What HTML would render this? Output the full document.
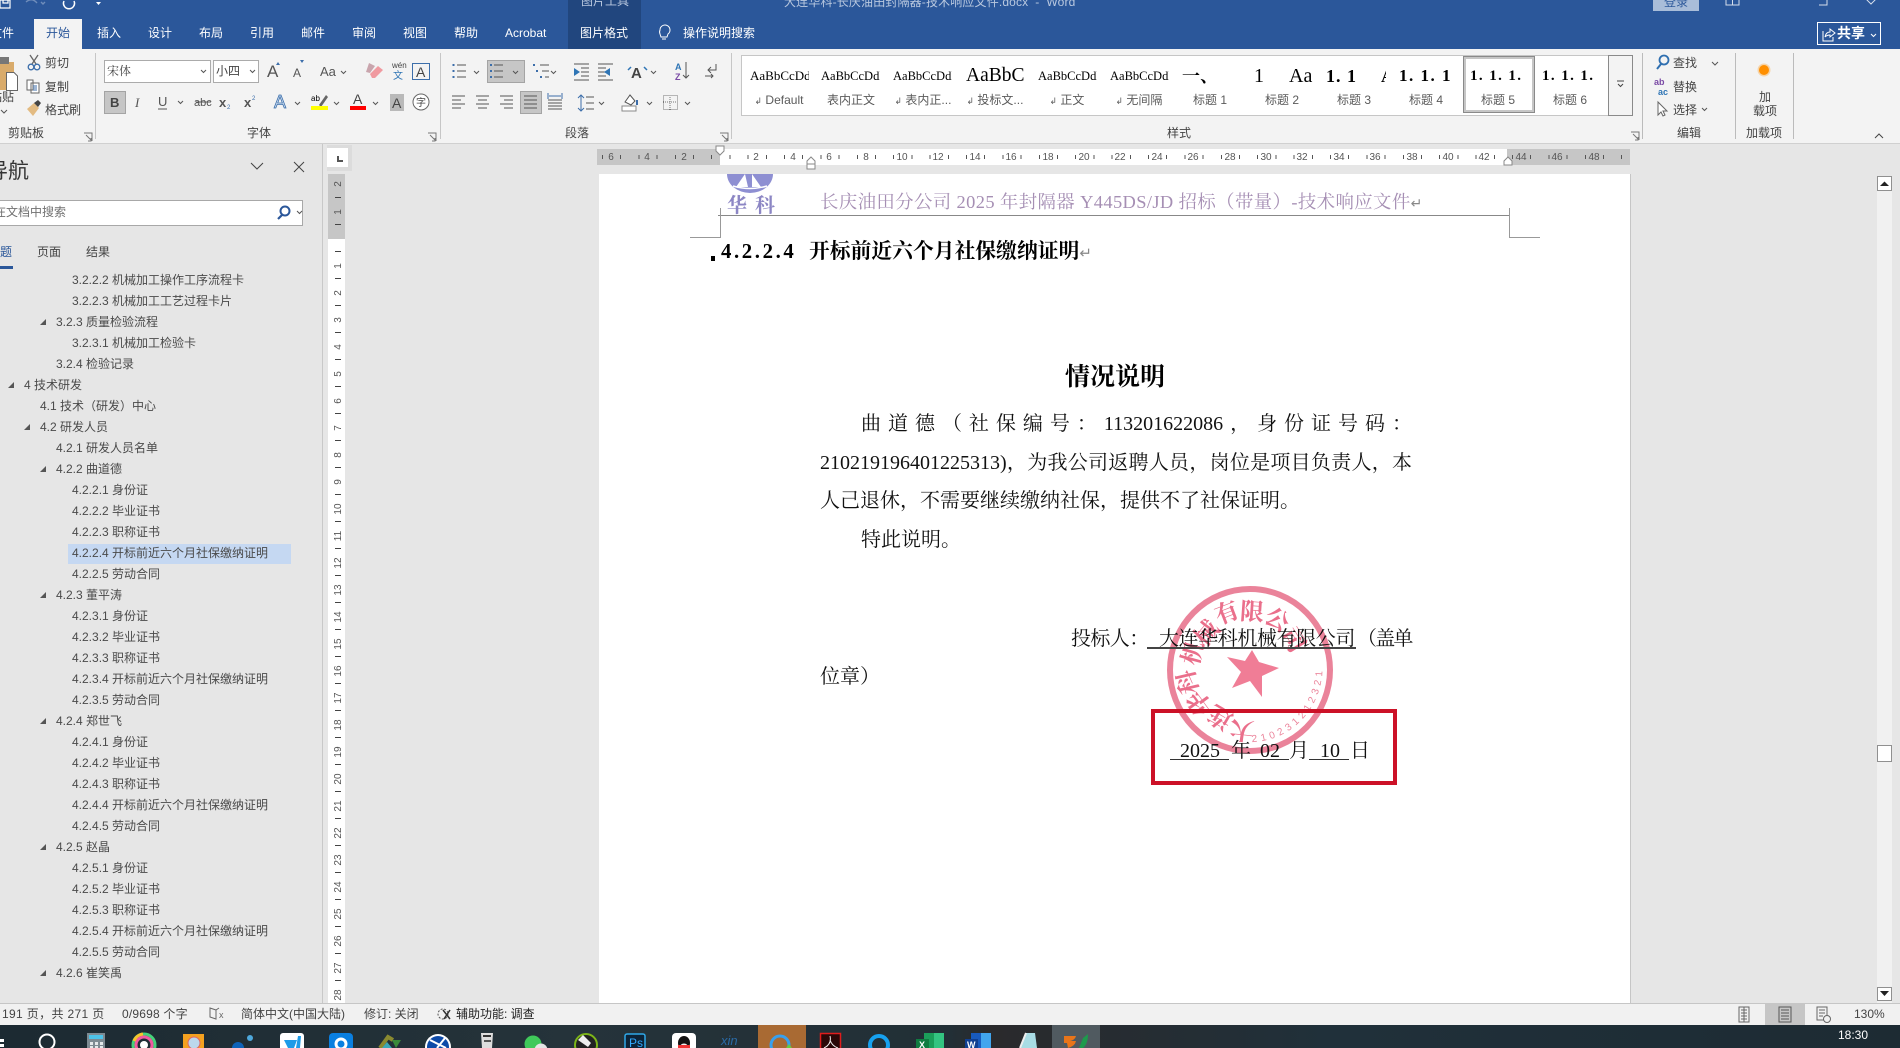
<!DOCTYPE html>
<html lang="zh-CN"><head><meta charset="utf-8"><title>Word</title>
<style>
html,body{margin:0;padding:0;width:1900px;height:1048px;overflow:hidden;background:#e6e6e6}
body{position:relative;font-family:"Liberation Sans","Noto Sans CJK SC",sans-serif;font-size:12px;color:#444}
div,span.a{position:absolute}
.t{position:absolute;line-height:16px;white-space:nowrap}
.c{transform:translateX(-50%)}
.w{color:#fff}
.n{position:absolute;line-height:16px;white-space:nowrap;color:#4a4a4a;font-size:12px;transform:translateY(1px)}
.tri{position:absolute;width:0;height:0;border-left:6px solid transparent;border-bottom:6px solid #555}
.p{position:absolute;overflow:hidden;white-space:nowrap;font-family:"Liberation Serif","Noto Serif CJK SC",serif;color:#000;height:24px;line-height:24px;width:59px;font-size:12.5px}
.l{position:absolute;top:92px;line-height:16px;color:#5a5a5a;white-space:nowrap;transform:translateX(-50%)}
.sep{position:absolute;width:1px;background:#c6c6c6}
.d{position:absolute;font-family:"Liberation Serif","Noto Serif CJK SC",serif;font-size:20px;color:#111;line-height:28px;white-space:nowrap}
.j{text-align:justify;text-align-last:justify;white-space:normal}
svg{position:absolute;left:0;top:0}
</style></head><body>

<!-- title bar -->
<div style="left:0;top:0;width:1900px;height:49px;background:#2b579a"></div>
<div style="left:568px;top:0;width:73px;height:49px;background:#21467e"></div>
<div class="t" style="left:581px;top:-7px;color:#b9c8df">图片工具</div>
<div class="t" style="left:784px;top:-6px;color:#b9c8df;letter-spacing:.15px">大连华科-长庆油田封隔器-技术响应文件.docx&nbsp; - &nbsp;Word</div>
<div style="left:1653px;top:0;width:46px;height:11px;background:#a9bdd9"></div>
<div class="t" style="left:1664px;top:-6px;color:#2b579a">登录</div>
<div style="left:34px;top:19px;width:48px;height:30px;background:#f3f3f3"></div>
<div class="t w" style="left:-10px;top:25px">文件</div>
<div class="t" style="left:46px;top:25px;color:#2b579a">开始</div>
<div class="t w" style="left:97px;top:25px">插入</div>
<div class="t w" style="left:148px;top:25px">设计</div>
<div class="t w" style="left:199px;top:25px">布局</div>
<div class="t w" style="left:250px;top:25px">引用</div>
<div class="t w" style="left:301px;top:25px">邮件</div>
<div class="t w" style="left:352px;top:25px">审阅</div>
<div class="t w" style="left:403px;top:25px">视图</div>
<div class="t w" style="left:454px;top:25px">帮助</div>
<div class="t w" style="left:505px;top:25px">Acrobat</div>
<div class="t w" style="left:580px;top:25px">图片格式</div>
<div class="t w" style="left:683px;top:25px">操作说明搜索</div>
<div style="left:1817px;top:22px;width:62px;height:21px;border:1px solid #fff"></div>
<div class="t w" style="left:1837px;top:25px;font-size:14px;font-weight:bold">共享</div>

<!-- ribbon -->
<div style="left:0;top:49px;width:1900px;height:94px;background:#f3f3f3;border-bottom:1px solid #d0d0d0"></div>
<div class="sep" style="left:95px;top:53px;height:86px"></div>
<div class="sep" style="left:440px;top:53px;height:86px"></div>
<div class="sep" style="left:731px;top:53px;height:86px"></div>
<div class="sep" style="left:1642px;top:53px;height:86px;background:#bbb"></div>
<div class="sep" style="left:1735px;top:53px;height:86px;background:#bbb"></div>
<div class="sep" style="left:1793px;top:53px;height:86px;background:#bbb"></div>

<div class="t" style="left:-10px;top:89px">粘贴</div>
<div class="t" style="left:45px;top:55px">剪切</div>
<div class="t" style="left:45px;top:79px">复制</div>
<div class="t" style="left:45px;top:102px">格式刷</div>
<div class="t c" style="left:26px;top:125px">剪贴板</div>
<div class="t c" style="left:259px;top:125px">字体</div>
<div class="t c" style="left:577px;top:125px">段落</div>
<div class="t c" style="left:1179px;top:125px">样式</div>
<div class="t c" style="left:1689px;top:125px">编辑</div>
<div class="t c" style="left:1764px;top:125px">加载项</div>

<div style="left:104px;top:60px;width:105px;height:21px;border:1px solid #ababab;background:#fff"></div>
<div class="t" style="left:107px;top:63px;font-family:'Noto Serif CJK SC',serif">宋体</div>
<div style="left:213px;top:60px;width:44px;height:21px;border:1px solid #ababab;background:#fff"></div>
<div class="t" style="left:216px;top:63px">小四</div>

<div style="left:104px;top:91px;width:20px;height:21px;background:#c6c6c6;border:1px solid #a4a4a4"></div>
<div style="left:487px;top:60px;width:36px;height:21px;background:#c6c6c6;border:1px solid #a4a4a4"></div>
<div style="left:520px;top:91px;width:20px;height:21px;background:#c6c6c6;border:1px solid #a4a4a4"></div>

<!-- style gallery -->
<div style="left:741px;top:55px;width:890px;height:59px;background:#fff;border:1px solid #c6c6c6"></div>
<div style="left:1463px;top:56px;width:66px;height:51px;border:3px solid #c6c6c6;outline:1px solid #8a8a8a;outline-offset:-1px;background:#fff"></div>
<div style="left:1608px;top:55px;width:23px;height:59px;background:#f3f3f3;border:1px solid #8a8a8a"></div>
<div class="p" style="left:750px;top:64px;font-size:13px">AaBbCcDdEe</div>
<div class="p" style="left:821px;top:64px;font-size:12.5px">AaBbCcDdEe</div>
<div class="p" style="left:893px;top:64px;font-size:12.5px">AaBbCcDdEe</div>
<div class="p" style="left:966px;top:64px;font-size:19.5px">AaBbC</div>
<div class="p" style="left:1038px;top:64px;font-size:12.5px">AaBbCcDdEe</div>
<div class="p" style="left:1110px;top:64px;font-size:12.5px">AaBbCcDdEe</div>
<div class="p" style="left:1182px;top:62px;font-size:18px;width:38px;height:28px;line-height:28px;font-weight:bold">一、</div>
<div class="p" style="left:1254px;top:64px;font-size:20px;width:20px">1</div>
<div class="p" style="left:1289px;top:64px;font-size:20px;width:30px">Aa</div>
<div class="p" style="left:1326px;top:64px;font-size:18px;width:34px;font-weight:bold;letter-spacing:1px">1. 1</div>
<div class="p" style="left:1381px;top:64px;font-size:18px;width:5px;font-weight:bold">A</div>
<div class="p" style="left:1399px;top:64px;font-size:17px;width:56px;font-weight:bold;letter-spacing:1.5px">1. 1. 1</div>
<div class="p" style="left:1470px;top:64px;font-size:15px;width:58px;font-weight:bold;letter-spacing:1.4px">1. 1. 1. 1</div>
<div class="p" style="left:1542px;top:64px;font-size:15px;width:58px;font-weight:bold;letter-spacing:1.4px">1. 1. 1. 1</div>
<div class="l" style="left:779px"><span style="font-size:9px">↲</span> Default</div>
<div class="l" style="left:851px">表内正文</div>
<div class="l" style="left:923px"><span style="font-size:9px">↲</span> 表内正...</div>
<div class="l" style="left:995px"><span style="font-size:9px">↲</span> 投标文...</div>
<div class="l" style="left:1067px"><span style="font-size:9px">↲</span> 正文</div>
<div class="l" style="left:1139px"><span style="font-size:9px">↲</span> 无间隔</div>
<div class="l" style="left:1210px">标题 1</div>
<div class="l" style="left:1282px">标题 2</div>
<div class="l" style="left:1354px">标题 3</div>
<div class="l" style="left:1426px">标题 4</div>
<div class="l" style="left:1498px">标题 5</div>
<div class="l" style="left:1570px">标题 6</div>

<div class="t" style="left:1673px;top:55px">查找</div>
<div class="t" style="left:1673px;top:79px">替换</div>
<div class="t" style="left:1673px;top:102px">选择</div>
<div class="t c" style="left:1765px;top:89px">加</div>
<div class="t c" style="left:1765px;top:103px">载项</div>

<!-- nav panel -->
<div style="left:322px;top:144px;width:1px;height:859px;background:#c8c8c8"></div>
<div class="t" style="left:-13px;top:158px;font-size:21px;line-height:28px;color:#333">导航</div>
<div style="left:-2px;top:200px;width:303px;height:24px;background:#fff;border:1px solid #a8a8a8"></div>
<div class="t" style="left:-6px;top:204px;color:#707070">在文档中搜索</div>
<div class="t" style="left:-12px;top:244px;color:#2b579a">标题</div>
<div style="left:0;top:266px;width:13px;height:3px;background:#2b579a"></div>
<div class="t" style="left:37px;top:244px">页面</div>
<div class="t" style="left:86px;top:244px">结果</div>
<div style="left:68px;top:544px;width:223px;height:20px;background:#c5d8f2"></div>

<div class="n" style="left:72px;top:271px">3.2.2.2 机械加工操作工序流程卡</div>
<div class="n" style="left:72px;top:292px">3.2.2.3 机械加工工艺过程卡片</div>
<div class="tri" style="left:40px;top:319px"></div><div class="n" style="left:56px;top:313px">3.2.3 质量检验流程</div>
<div class="n" style="left:72px;top:334px">3.2.3.1 机械加工检验卡</div>
<div class="n" style="left:56px;top:355px">3.2.4 检验记录</div>
<div class="tri" style="left:8px;top:382px"></div><div class="n" style="left:24px;top:376px">4 技术研发</div>
<div class="n" style="left:40px;top:397px">4.1 技术（研发）中心</div>
<div class="tri" style="left:24px;top:424px"></div><div class="n" style="left:40px;top:418px">4.2 研发人员</div>
<div class="n" style="left:56px;top:439px">4.2.1 研发人员名单</div>
<div class="tri" style="left:40px;top:466px"></div><div class="n" style="left:56px;top:460px">4.2.2 曲道德</div>
<div class="n" style="left:72px;top:481px">4.2.2.1 身份证</div>
<div class="n" style="left:72px;top:502px">4.2.2.2 毕业证书</div>
<div class="n" style="left:72px;top:523px">4.2.2.3 职称证书</div>
<div class="n" style="left:72px;top:544px">4.2.2.4 开标前近六个月社保缴纳证明</div>
<div class="n" style="left:72px;top:565px">4.2.2.5 劳动合同</div>
<div class="tri" style="left:40px;top:592px"></div><div class="n" style="left:56px;top:586px">4.2.3 董平涛</div>
<div class="n" style="left:72px;top:607px">4.2.3.1 身份证</div>
<div class="n" style="left:72px;top:628px">4.2.3.2 毕业证书</div>
<div class="n" style="left:72px;top:649px">4.2.3.3 职称证书</div>
<div class="n" style="left:72px;top:670px">4.2.3.4 开标前近六个月社保缴纳证明</div>
<div class="n" style="left:72px;top:691px">4.2.3.5 劳动合同</div>
<div class="tri" style="left:40px;top:718px"></div><div class="n" style="left:56px;top:712px">4.2.4 郑世飞</div>
<div class="n" style="left:72px;top:733px">4.2.4.1 身份证</div>
<div class="n" style="left:72px;top:754px">4.2.4.2 毕业证书</div>
<div class="n" style="left:72px;top:775px">4.2.4.3 职称证书</div>
<div class="n" style="left:72px;top:796px">4.2.4.4 开标前近六个月社保缴纳证明</div>
<div class="n" style="left:72px;top:817px">4.2.4.5 劳动合同</div>
<div class="tri" style="left:40px;top:844px"></div><div class="n" style="left:56px;top:838px">4.2.5 赵晶</div>
<div class="n" style="left:72px;top:859px">4.2.5.1 身份证</div>
<div class="n" style="left:72px;top:880px">4.2.5.2 毕业证书</div>
<div class="n" style="left:72px;top:901px">4.2.5.3 职称证书</div>
<div class="n" style="left:72px;top:922px">4.2.5.4 开标前近六个月社保缴纳证明</div>
<div class="n" style="left:72px;top:943px">4.2.5.5 劳动合同</div>
<div class="tri" style="left:40px;top:970px"></div><div class="n" style="left:56px;top:964px">4.2.6 崔笑禹</div>

<!-- rulers -->
<div style="left:597px;top:149px;width:1033px;height:16px;background:#c6c6c6"></div>
<div style="left:720px;top:149px;width:787px;height:16px;background:#fff"></div>
<div style="left:601.7px;top:155px;width:1028px;height:4px;background:repeating-linear-gradient(90deg,#555 0,#555 1px,transparent 1px,transparent 18.2px)"></div>
<div style="left:327px;top:145px;width:25px;height:26px;background:#dcdcdc"></div>
<div style="left:327px;top:148px;width:21px;height:19px;background:#fff"></div>
<div style="left:337px;top:156px;width:2px;height:6px;background:#555"></div>
<div style="left:337px;top:160px;width:6px;height:2px;background:#555"></div>
<div style="left:328px;top:174px;width:17px;height:65px;background:#c6c6c6"></div>
<div style="left:328px;top:239px;width:17px;height:764px;background:#fff"></div>
<div style="left:335px;top:197px;width:6px;height:806px;background:repeating-linear-gradient(180deg,#444 0,#444 1px,transparent 1px,transparent 27px)"></div>

<!-- page -->
<div style="left:599px;top:174px;width:1031px;height:829px;background:#fff;border-right:1px solid #c6c6c6"></div>

<!-- logo + stamp -->
<svg width="1900" height="1048" viewBox="0 0 1900 1048">
<path d="M727 174A23 19 0 0 0 773 174Z" fill="#8e8fd2"/>
<path d="M745 174l-9 13h12zM752 174v13h9z" fill="#fff"/>
<path d="M733 186q17 5 34 0" stroke="#fff" stroke-width="1.500" fill="none"/>
<g opacity=".88">
<defs><path id="s2" d="M1252 742A72 74 0 0 0 1322 660"/></defs>
<ellipse cx="1250" cy="670" rx="80" ry="81" fill="none" stroke="#e8738d" stroke-width="6"/>
<polygon points="1252,650 1259,662 1279,668 1262,676 1262,697 1250,681 1232,688 1241,672 1227,657 1245,661" fill="#ee6c88"/>
<g font-family="Noto Serif CJK SC,serif" font-size="24" fill="#e85c7c" font-weight="bold" text-anchor="middle">
<text transform="translate(1242 730) rotate(186) translate(0 8)">大</text>
<text transform="translate(1220 717) rotate(210) translate(0 8)">连</text>
<text transform="translate(1200 703) rotate(234) translate(0 8)">华</text>
<text transform="translate(1188 682) rotate(257) translate(0 8)">科</text>
<text transform="translate(1193 653) rotate(285) translate(0 8)">机</text>
<text transform="translate(1207 633) rotate(310) translate(0 8)">械</text>
<text transform="translate(1227 613) rotate(339) translate(0 8)">有</text>
<text transform="translate(1252 612) rotate(4) translate(0 8)">限</text>
<text transform="translate(1277 620) rotate(31) translate(0 8)">公</text>
<text transform="translate(1293 640) rotate(58) translate(0 8)">司</text>
</g>
<text font-family="Liberation Sans,sans-serif" font-size="10" fill="#e8738d"><textPath href="#s2" letter-spacing="3.900">210231212321</textPath></text>
</g>
</svg>

<!-- header -->
<div class="t" style="left:727px;top:192px;color:#8c86c4;font-size:20px;line-height:24px;letter-spacing:8px;font-weight:bold;font-family:'Noto Serif CJK SC',serif">华科</div>
<div class="t" style="left:820px;top:190px;color:#a68fb4;font-size:18.4px;line-height:24px;letter-spacing:.4px;font-family:'Liberation Serif','Noto Serif CJK SC',serif">长庆油田分公司 2025 年封隔器 Y445DS/JD 招标（带量）-技术响应文件<span style="color:#888;font-size:14px">↵</span></div>
<div style="left:718px;top:215px;width:792px;height:1px;background:#888"></div>
<div style="left:720px;top:208px;width:1px;height:29px;background:#999"></div>
<div style="left:690px;top:237px;width:31px;height:1px;background:#999"></div>
<div style="left:1509px;top:208px;width:1px;height:29px;background:#999"></div>
<div style="left:1509px;top:237px;width:31px;height:1px;background:#999"></div>

<!-- body -->
<div style="left:711px;top:256px;width:4px;height:5px;background:#000"></div>
<div class="d" style="left:721px;top:238px;font-weight:bold;font-size:20.8px;color:#000;letter-spacing:2.600px">4.2.2.4</div>
<div class="d" style="left:809px;top:238px;font-weight:bold;font-size:20.8px;color:#000">开标前近六个月社保缴纳证明<span style="color:#888;font-weight:normal;font-size:15px">↵</span></div>
<div class="d" style="left:1065px;top:360px;font-weight:bold;font-size:25px;line-height:36px;color:#000">情况说明</div>
<div class="d j" style="left:861px;top:410px;width:551px;height:28px">曲道德（社保编号：113201622086，身份证号码：</div>
<div class="d j" style="left:820px;top:449px;width:592px;height:28px">210219196401225313)，为我公司返聘人员，岗位是项目负责人，本</div>
<div class="d" style="left:820px;top:487px">人己退休，不需要继续缴纳社保，提供不了社保证明。</div>
<div class="d" style="left:861px;top:526px">特此说明。</div>
<div class="d" style="left:1071px;top:625px;letter-spacing:-.6px">投标人：</div>
<div class="d" style="left:1159px;top:625px;letter-spacing:-.4px">大连华科机械有限公司</div>
<div style="left:1147px;top:647px;width:209px;height:2px;background:#444"></div>
<div class="d" style="left:1357px;top:625px;letter-spacing:-1.800px">（盖单</div>
<div class="d" style="left:820px;top:663px">位章）</div>
<div class="d" style="left:1180px;top:737px">2025</div>
<div class="d" style="left:1231px;top:737px">年</div>
<div class="d" style="left:1260px;top:737px">02</div>
<div class="d" style="left:1289px;top:737px">月</div>
<div class="d" style="left:1320px;top:737px">10</div>
<div class="d" style="left:1350px;top:737px">日</div>
<div style="left:1170px;top:759px;width:59px;height:1px;background:#333"></div>
<div style="left:1250px;top:759px;width:39px;height:1px;background:#333"></div>
<div style="left:1309px;top:759px;width:40px;height:1px;background:#333"></div>
<div style="left:1151px;top:709px;width:238px;height:68px;border:4px solid #cc1127"></div>

<!-- scrollbar -->
<div style="left:1877px;top:176px;width:15px;height:827px;background:#f1f1f1"></div>
<div style="left:1877px;top:176px;width:13px;height:13px;background:#fff;border:1px solid #909090"></div>
<div style="left:1877px;top:745px;width:13px;height:15px;background:#fff;border:1px solid #909090"></div>
<div style="left:1877px;top:987px;width:13px;height:12px;background:#fff;border:1px solid #909090"></div>

<!-- status -->
<div style="left:0;top:1003px;width:1900px;height:22px;background:#f1f1f1;border-top:1px solid #c6c6c6;box-sizing:border-box"></div>
<div style="left:1765px;top:1004px;width:40px;height:21px;background:#c6c6c6"></div>
<div class="t" style="left:2px;top:1006px;font-size:12px;letter-spacing:.35px">191 页，共 271 页</div>
<div class="t" style="left:122px;top:1006px;font-size:12px;letter-spacing:.2px">0/9698 个字</div>
<div class="t" style="left:241px;top:1006px;font-size:12px">简体中文(中国大陆)</div>
<div class="t" style="left:364px;top:1006px;font-size:12px">修订: 关闭</div>
<div class="t" style="left:456px;top:1006px;font-size:12px;color:#222">辅助功能: 调查</div>
<div class="t" style="left:1854px;top:1006px;font-size:12px">130%</div>

<!-- taskbar -->
<div style="left:0;top:1025px;width:1900px;height:23px;background:linear-gradient(90deg,#1c2a32,#25333a 30%,#222f36 50%,#2a2a2c 52%,#20303a 70%,#1d2b33)"></div>
<div style="left:758px;top:1025px;width:48px;height:23px;background:#a96a33"></div>
<div style="left:1052px;top:1025px;width:48px;height:23px;background:#505a60"></div>
<div class="t w" style="left:1838px;top:1027px;font-size:12px">18:30</div>

<!-- icons and ruler numbers -->
<svg width="1900" height="1048" viewBox="0 0 1900 1048" font-family="Liberation Sans,sans-serif">
<!-- qat -->
<path d="M0 0H10V8H0Z M3 0V3H8V0" fill="none" stroke="#fff" stroke-width="1.2"/>
<path d="M26 2Q32-3 37 3M41 2l2 2 2-2" stroke="#6f8dbb" fill="none" stroke-width="1.4"/>
<path d="M64 1A5.5 5.5 0 1 0 74 1" stroke="#fff" fill="none" stroke-width="1.5"/>
<path d="M96 2h5l-2.500 3z" fill="#fff"/>
<!-- window controls -->
<path d="M1726 0V5H1739V0M1732.500 5V0M1819 5H1827V-1M1866-1L1871 4 1876-1" stroke="#d5deeb" fill="none"/>
<!-- bulb -->
<path d="M660 30a5 5 0 1 1 8 4l-1 3h-6l-1-3a5 5 0 0 1 0-4zM662 39h4" stroke="#fff" fill="none"/>
<!-- share -->
<path d="M1823 31v10h10v-4M1825 37q1-5 5-5v-3l5 4-5 4v-2q-3 0-5 2" stroke="#fff" fill="none"/>
<path d="M1871 34l2.500 2.500 2.500-2.500" stroke="#fff" fill="none"/>
<!-- paste -->
<rect x="-6" y="62" width="20" height="28" fill="#d9ab6b"/><rect x="0" y="57" width="9" height="7" fill="#777"/>
<path d="M6.500 72.500H14L17.500 76V90.500H6.500Z" fill="#fff" stroke="#666"/>
<path d="M1 110l3 3 3-3" stroke="#555" fill="none"/>
<!-- scissors -->
<path d="M30 55l6 9M38 55l-6 9" stroke="#666" stroke-width="1.300" fill="none"/>
<circle cx="31" cy="67" r="2.800" fill="none" stroke="#3c6eaa" stroke-width="1.300"/><circle cx="37" cy="67" r="2.800" fill="none" stroke="#3c6eaa" stroke-width="1.300"/>
<!-- copy -->
<path d="M27 80h6v10h-6zM31 83h8v10h-8z" fill="#fff" stroke="#666"/><path d="M33 86h4M33 88h4M33 90h4" stroke="#3c6eaa"/>
<!-- format painter -->
<path d="M27 109l7-6 5 5-6 8z" fill="#e3bb82"/><path d="M34 103l4-3 3 3-3 4z" fill="#444"/>
<!-- corner launchers -->
<g fill="none" stroke="#777"><path d="M84 133h8v8M86 135l5 5M88 141h3v-3"/><path d="M428 133h8v8M430 135l5 5M432 141h3v-3"/><path d="M720 133h8v8M722 135l5 5M724 141h3v-3"/><path d="M1631 132h8v8M1633 134l5 5M1635 140h3v-3"/></g>
<!-- font chevrons -->
<g fill="none" stroke="#555"><path d="M201 70l2.500 2.500 2.500-2.500M250 70l2.500 2.500 2.500-2.500M341 71l2.500 2.500 2.500-2.500M178 101l2.500 2.500 2.500-2.500M295 102l2.500 2.500 2.500-2.500M334 102l2.500 2.500 2.500-2.500M373 102l2.500 2.500 2.500-2.500M474 71l2.500 2.500 2.500-2.500M513 71l2.500 2.500 2.500-2.500M551 71l2.500 2.500 2.500-2.500M651 71l2.500 2.500 2.500-2.500M599 102l2.500 2.500 2.500-2.500M647 102l2.500 2.500 2.500-2.500M685 102l2.500 2.500 2.500-2.500"/><path d="M1712 62l3 3 3-3M1702 108l2.500 2.500 2.500-2.500M297 211l2.500 2.500 2.500-2.500"/><path d="M1875 138l4-4 4 4M251 163l6 6 6-6M294 162l10 10M304 162l-10 10" stroke="#444"/></g>
<g fill="#555" font-size="13"><text x="267" y="77" font-size="17">A</text><text x="293" y="77" font-size="12">A</text><text x="320" y="76" font-size="13">Aa</text><text x="392" y="68" font-size="8" fill="#444">wén</text><text x="393" y="79" font-size="10" fill="#2f75b5">文</text>
<text x="110" y="107" font-weight="bold" fill="#444">B</text><text x="135" y="107" font-family="Liberation Serif,serif" font-style="italic">I</text><text x="158" y="106">U</text><text x="194" y="106" font-size="11">abc</text><text x="219" y="107" font-weight="bold">x</text><text x="244" y="107" font-weight="bold">x</text><text x="227" y="109" font-size="6" fill="#3c6eaa">2</text><text x="252" y="100" font-size="6" fill="#3c6eaa">2</text></g>
<path d="M158 109h9M196 102h15" stroke="#555"/>
<path d="M276 65l2-3 2 3zM300 60l2 3 2-3z" fill="#3c6eaa"/>
<path d="M370 74l8-8 5 4-8 8h-3z" fill="#f09aa0"/><path d="M366 72l3-9 6 3-5 7z" fill="#c9a5ad"/>
<rect x="412.500" y="63.500" width="17" height="16" fill="none" stroke="#3c6eaa"/><text x="416" y="77" font-size="14" fill="#444">A</text>
<text x="274" y="108" font-size="18" fill="#cfe0f2" stroke="#3c6eaa" stroke-width=".8">A</text>
<text x="311" y="101" font-size="8">ab</text><path d="M319 105l7-10 2 2-7 10z" fill="#666"/><rect x="311" y="106" width="17" height="4" fill="#ffff00"/>
<text x="353" y="104" font-size="14" fill="#444">A</text><rect x="350" y="106" width="16" height="4" fill="#f00"/>
<rect x="390" y="94" width="14" height="17" fill="#b9b9b9"/><text x="392" y="108" font-size="14" fill="#444">A</text>
<circle cx="421" cy="102" r="8" fill="#fff" stroke="#666"/><text x="416" y="106" font-size="10" fill="#444" font-family="Noto Sans CJK SC,sans-serif">字</text>
<!-- paragraph icons -->
<g stroke="#555" fill="none">
<path d="M457 65h9M457 71h9M457 77h9M494 65h9M494 71h9M494 77h9"/>
<path d="M540 65h9M542 71h7M545 77h4"/>
<path d="M574 64h15M581 68h8M581 72h8M581 76h8M574 80h15M598 64h15M598 68h8M598 72h8M598 76h8M598 80h15"/>
<path d="M452 96h13M452 100h9M452 104h13M452 108h9M476 96h13M478 100h9M476 104h13M478 108h9M500 96h13M504 100h9M500 104h13M504 108h9M524 96h13M524 100h13M524 104h13M524 108h13M548 100h14M548 103h14M548 106h14M548 109h14"/>
<path d="M586 97h8M586 103h8M586 109h8"/>
<path d="M716 64v6h-8M711 67l-3 3 3 3M705 76h8M711 74l2 2-2 2"/>
</g>
<path d="M581 95v16M578 98l3-3 3 3M578 108l3 3 3-3M548 93v6M562 93v6M549 96h12" stroke="#3c6eaa" fill="none"/>
<path d="M452.500 65h2M452.500 71h2M452.500 77h2" stroke="#3c6eaa" stroke-width="2"/>
<path d="M490 65h2M490 71h2M490 77h2M533 65h2M536 71h2M540 77h2" stroke="#3c6eaa" stroke-width="2"/>
<path d="M580 72l-6-4v8zM604 72l6-4v8z" fill="#2f75b5"/>
<text x="631" y="78" font-size="15" fill="#444" font-weight="bold">A</text><path d="M628 70l3-3M647 70l-3-3" stroke="#2f75b5" stroke-width="1.500"/>
<text x="675" y="70" font-size="9" fill="#2f75b5" font-weight="bold">A</text><text x="675" y="80" font-size="9" fill="#7a4aa5" font-weight="bold">Z</text><path d="M686 62v16M683 75l3 3 3-3" stroke="#555" fill="none"/>
<rect x="622" y="106" width="14" height="5" fill="#fff" stroke="#888"/><path d="M625 102l5-7 5 6-4 4z" fill="#fff" stroke="#555"/><path d="M637 100v5" stroke="#3c6eaa" stroke-width="2"/>
<rect x="663.500" y="95.500" width="14" height="14" fill="none" stroke="#777" stroke-dasharray="1 1"/><path d="M663 102h15M670 95v15" stroke="#777" stroke-dasharray="1 1"/>
<!-- styles more -->
<path d="M1617 81h7M1618 84l2.500 2.500 2.500-2.500" fill="none" stroke="#444"/>
<!-- find replace select -->
<circle cx="1664" cy="60" r="4.500" fill="none" stroke="#2f6fb0" stroke-width="1.800"/><path d="M1661 64l-4 5" stroke="#2f6fb0" stroke-width="2"/>
<text x="1654" y="85" font-size="9" fill="#7a4aa5" font-weight="bold">ab</text><text x="1658" y="95" font-size="9" fill="#2f75b5" font-weight="bold">ac</text>
<path d="M1658 102v13l3-3 2 4 2-1-2-4h4z" fill="#fff" stroke="#666"/>
<circle cx="1764" cy="70" r="5" fill="#ff9000"/>
<circle cx="1764" cy="70" r="6.500" fill="#ff9000" opacity=".3"/>
<!-- nav search -->
<circle cx="285" cy="211" r="4.500" fill="none" stroke="#2b579a" stroke-width="2"/><path d="M282 215l-4 4" stroke="#2b579a" stroke-width="2.200"/>
<!-- ruler markers -->
<path d="M716 146h8v5l-4 4-4-4z" fill="#fff" stroke="#888"/>
<path d="M807 161l4-4 4 4v3h-8zM807 164h8v5h-8z" fill="#fff" stroke="#888"/>
<path d="M1504 161l4-4 4 4v4h-8z" fill="#fff" stroke="#888"/>
<!-- top ruler numbers -->
<g font-size="10" fill="#555" text-anchor="middle">
<text x="611" y="160">6</text><text x="647" y="160">4</text><text x="684" y="160">2</text>
<text x="756" y="160">2</text><text x="793" y="160">4</text><text x="829" y="160">6</text><text x="866" y="160">8</text><text x="902" y="160">10</text><text x="938" y="160">12</text><text x="975" y="160">14</text><text x="1011" y="160">16</text><text x="1048" y="160">18</text><text x="1084" y="160">20</text><text x="1120" y="160">22</text><text x="1157" y="160">24</text><text x="1193" y="160">26</text><text x="1230" y="160">28</text><text x="1266" y="160">30</text><text x="1302" y="160">32</text><text x="1339" y="160">34</text><text x="1375" y="160">36</text><text x="1412" y="160">38</text><text x="1448" y="160">40</text><text x="1484" y="160">42</text><text x="1521" y="160">44</text><text x="1557" y="160">46</text><text x="1594" y="160">48</text>
</g>
<!-- vertical ruler numbers -->
<g font-size="10" fill="#555" text-anchor="middle">
<text transform="translate(341 184) rotate(-90)">2</text><text transform="translate(341 212) rotate(-90)">1</text>
<text transform="translate(341 266) rotate(-90)">1</text><text transform="translate(341 293) rotate(-90)">2</text><text transform="translate(341 320) rotate(-90)">3</text><text transform="translate(341 347) rotate(-90)">4</text><text transform="translate(341 374) rotate(-90)">5</text><text transform="translate(341 401) rotate(-90)">6</text><text transform="translate(341 428) rotate(-90)">7</text><text transform="translate(341 455) rotate(-90)">8</text><text transform="translate(341 482) rotate(-90)">9</text><text transform="translate(341 509) rotate(-90)">10</text><text transform="translate(341 536) rotate(-90)">11</text><text transform="translate(341 563) rotate(-90)">12</text><text transform="translate(341 590) rotate(-90)">13</text><text transform="translate(341 617) rotate(-90)">14</text><text transform="translate(341 644) rotate(-90)">15</text><text transform="translate(341 671) rotate(-90)">16</text><text transform="translate(341 698) rotate(-90)">17</text><text transform="translate(341 725) rotate(-90)">18</text><text transform="translate(341 752) rotate(-90)">19</text><text transform="translate(341 779) rotate(-90)">20</text><text transform="translate(341 806) rotate(-90)">21</text><text transform="translate(341 833) rotate(-90)">22</text><text transform="translate(341 860) rotate(-90)">23</text><text transform="translate(341 887) rotate(-90)">24</text><text transform="translate(341 914) rotate(-90)">25</text><text transform="translate(341 941) rotate(-90)">26</text><text transform="translate(341 968) rotate(-90)">27</text><text transform="translate(341 995) rotate(-90)">28</text>
</g>
<!-- scrollbar arrows -->
<path d="M1880 186l4.500-4.500 4.500 4.500z" fill="#222"/><path d="M1880 991h9l-4.500 5z" fill="#222"/>
<!-- status icons -->
<path d="M210 1008l6 2v9l-6-2zM216 1010l3-2" fill="none" stroke="#666"/><text x="219" y="1018" font-size="9" fill="#666">x</text>
<circle cx="443" cy="1014" r="5" fill="none" stroke="#555" stroke-dasharray="2 1.500"/><path d="M443 1010l7 9M450 1010l-6 9" stroke="#333" stroke-width="1.500"/>
<path d="M1739 1007h10v15h-10zM1744 1007v15M1741 1010h6M1741 1013h6M1741 1016h6M1741 1019h6" fill="none" stroke="#666"/>
<path d="M1779 1007h12v15h-12zM1781 1010h8M1781 1013h8M1781 1016h8M1781 1019h8" fill="none" stroke="#555"/>
<path d="M1817 1007h10v13h-10zM1819 1010h6M1819 1013h6M1819 1016h4" fill="none" stroke="#666"/><circle cx="1827" cy="1019" r="3.500" fill="#f1f1f1" stroke="#666"/>
<!-- taskbar icons -->
<path d="M0 1039h4v3H0zM0 1044h4v3H0z" fill="#fff"/>
<circle cx="47" cy="1042" r="7.500" fill="none" stroke="#fff" stroke-width="2"/>
<rect x="87" y="1033" width="18" height="18" fill="#7d8a92"/><rect x="89" y="1035" width="14" height="4" fill="#4dc3e8"/><path d="M90 1042h3v3h-3zM95 1042h3v3h-3zM100 1042h3v3h-3zM90 1046h3v2h-3zM95 1046h3v2h-3zM100 1046h3v2h-3z" fill="#e4e8ea"/>
<circle cx="144" cy="1045" r="11" fill="none" stroke="#45d17a" stroke-width="3"/><circle cx="144" cy="1045" r="8" fill="none" stroke="#f05aa0" stroke-width="3"/><circle cx="144" cy="1045" r="4" fill="#fff"/><path d="M134 1041a11 11 0 0 1 9-7" stroke="#f8c32c" stroke-width="3" fill="none"/>
<rect x="183" y="1034" width="21" height="14" fill="#f5a11f"/><circle cx="194" cy="1043" r="6" fill="#bcd8ec" stroke="#d66"/>
<circle cx="238" cy="1048" r="6" fill="#0e62b8"/><circle cx="250" cy="1038" r="3" fill="#4ea8dc"/>
<rect x="280" y="1033" width="24" height="18" rx="3" fill="#fff"/><path d="M284 1040h13l-3 8h-6zM298 1036h3l-1 12h-4z" fill="#1c9be8"/>
<rect x="329" y="1033" width="24" height="18" rx="4" fill="#0a7fe0"/><circle cx="341" cy="1044" r="5" fill="none" stroke="#fff" stroke-width="3"/>
<path d="M380 1048l8-11 5 3" stroke="#8a8a30" stroke-width="4" fill="none"/><path d="M392 1040h9l-5 8z" fill="#3a8a3a"/><path d="M382 1048l5-6 5 6z" fill="#3aa8b8"/>
<circle cx="438" cy="1047" r="13" fill="#fff"/><circle cx="438" cy="1047" r="11" fill="#0d4aa8"/><path d="M430 1040l16 8M445 1038l-8 10" stroke="#fff" stroke-width="2"/>
<path d="M481 1033h12l-1 15h-10z" fill="#ddd"/><rect x="483" y="1035" width="8" height="2" fill="#333"/><rect x="484" y="1040" width="7" height="2" fill="#555"/>
<circle cx="533" cy="1044" r="8.500" fill="#3fc95a"/><circle cx="541" cy="1050" r="6.500" fill="#e4e4e4"/>
<circle cx="586" cy="1045" r="11" fill="#222" stroke="#7cb518" stroke-width="2"/><path d="M578 1040l5-5 8 8-3 4z" fill="#eee"/>
<rect x="625" y="1034" width="20" height="18" rx="2" fill="#0c2338" stroke="#2fa8e8" stroke-width="1.500"/><text x="629" y="1047" font-size="12" fill="#31a8ff">Ps</text>
<rect x="672" y="1033" width="24" height="18" rx="4" fill="#fff"/><ellipse cx="684" cy="1043" rx="6" ry="7" fill="#111"/><ellipse cx="684" cy="1047" rx="4" ry="3.500" fill="#eee"/><rect x="678" y="1045" width="12" height="3" fill="#e33"/>
<text x="721" y="1045" font-size="13" font-style="italic" fill="#2a6aa5">xin</text>
<circle cx="780" cy="1045" r="9" fill="none" stroke="#38a0ee" stroke-width="3"/><path d="M786 1048l3-4 3 4z" fill="#6c4"/>
<rect x="820.500" y="1033.500" width="20" height="18" fill="#2a0808" stroke="#e01c1c" stroke-width="1.500"/><path d="M830 1036q2 8-6 12M830 1040q2 6 8 8" stroke="#eee" fill="none"/>
<circle cx="879" cy="1045" r="9" fill="none" stroke="#16a1f0" stroke-width="4"/>
<rect x="924" y="1033" width="20" height="16" fill="#1b9e5a"/><rect x="934" y="1033" width="10" height="16" fill="#33c481"/><rect x="916" y="1039" width="13" height="11" fill="#107c41"/><text x="919" y="1048" font-size="9" fill="#fff" font-weight="bold">X</text>
<rect x="971" y="1033" width="20" height="16" fill="#185abd"/><rect x="981" y="1033" width="10" height="16" fill="#41a5ee"/><rect x="965" y="1039" width="13" height="11" fill="#103f91"/><text x="967" y="1048" font-size="9" fill="#fff" font-weight="bold">W</text>
<path d="M1020 1048l6-15h9l2 15z" fill="#a8dce4"/><path d="M1020 1048l6-15" stroke="#eee" stroke-width="2"/>
<path d="M1064 1036h12q-1 4-6 5h6q-1 5-8 7l-1-5h-3z" fill="#e8751a"/><path d="M1079 1048l4-10 5-4q0 10-5 14z" fill="#1e9a4c"/>
</svg>
</body></html>
